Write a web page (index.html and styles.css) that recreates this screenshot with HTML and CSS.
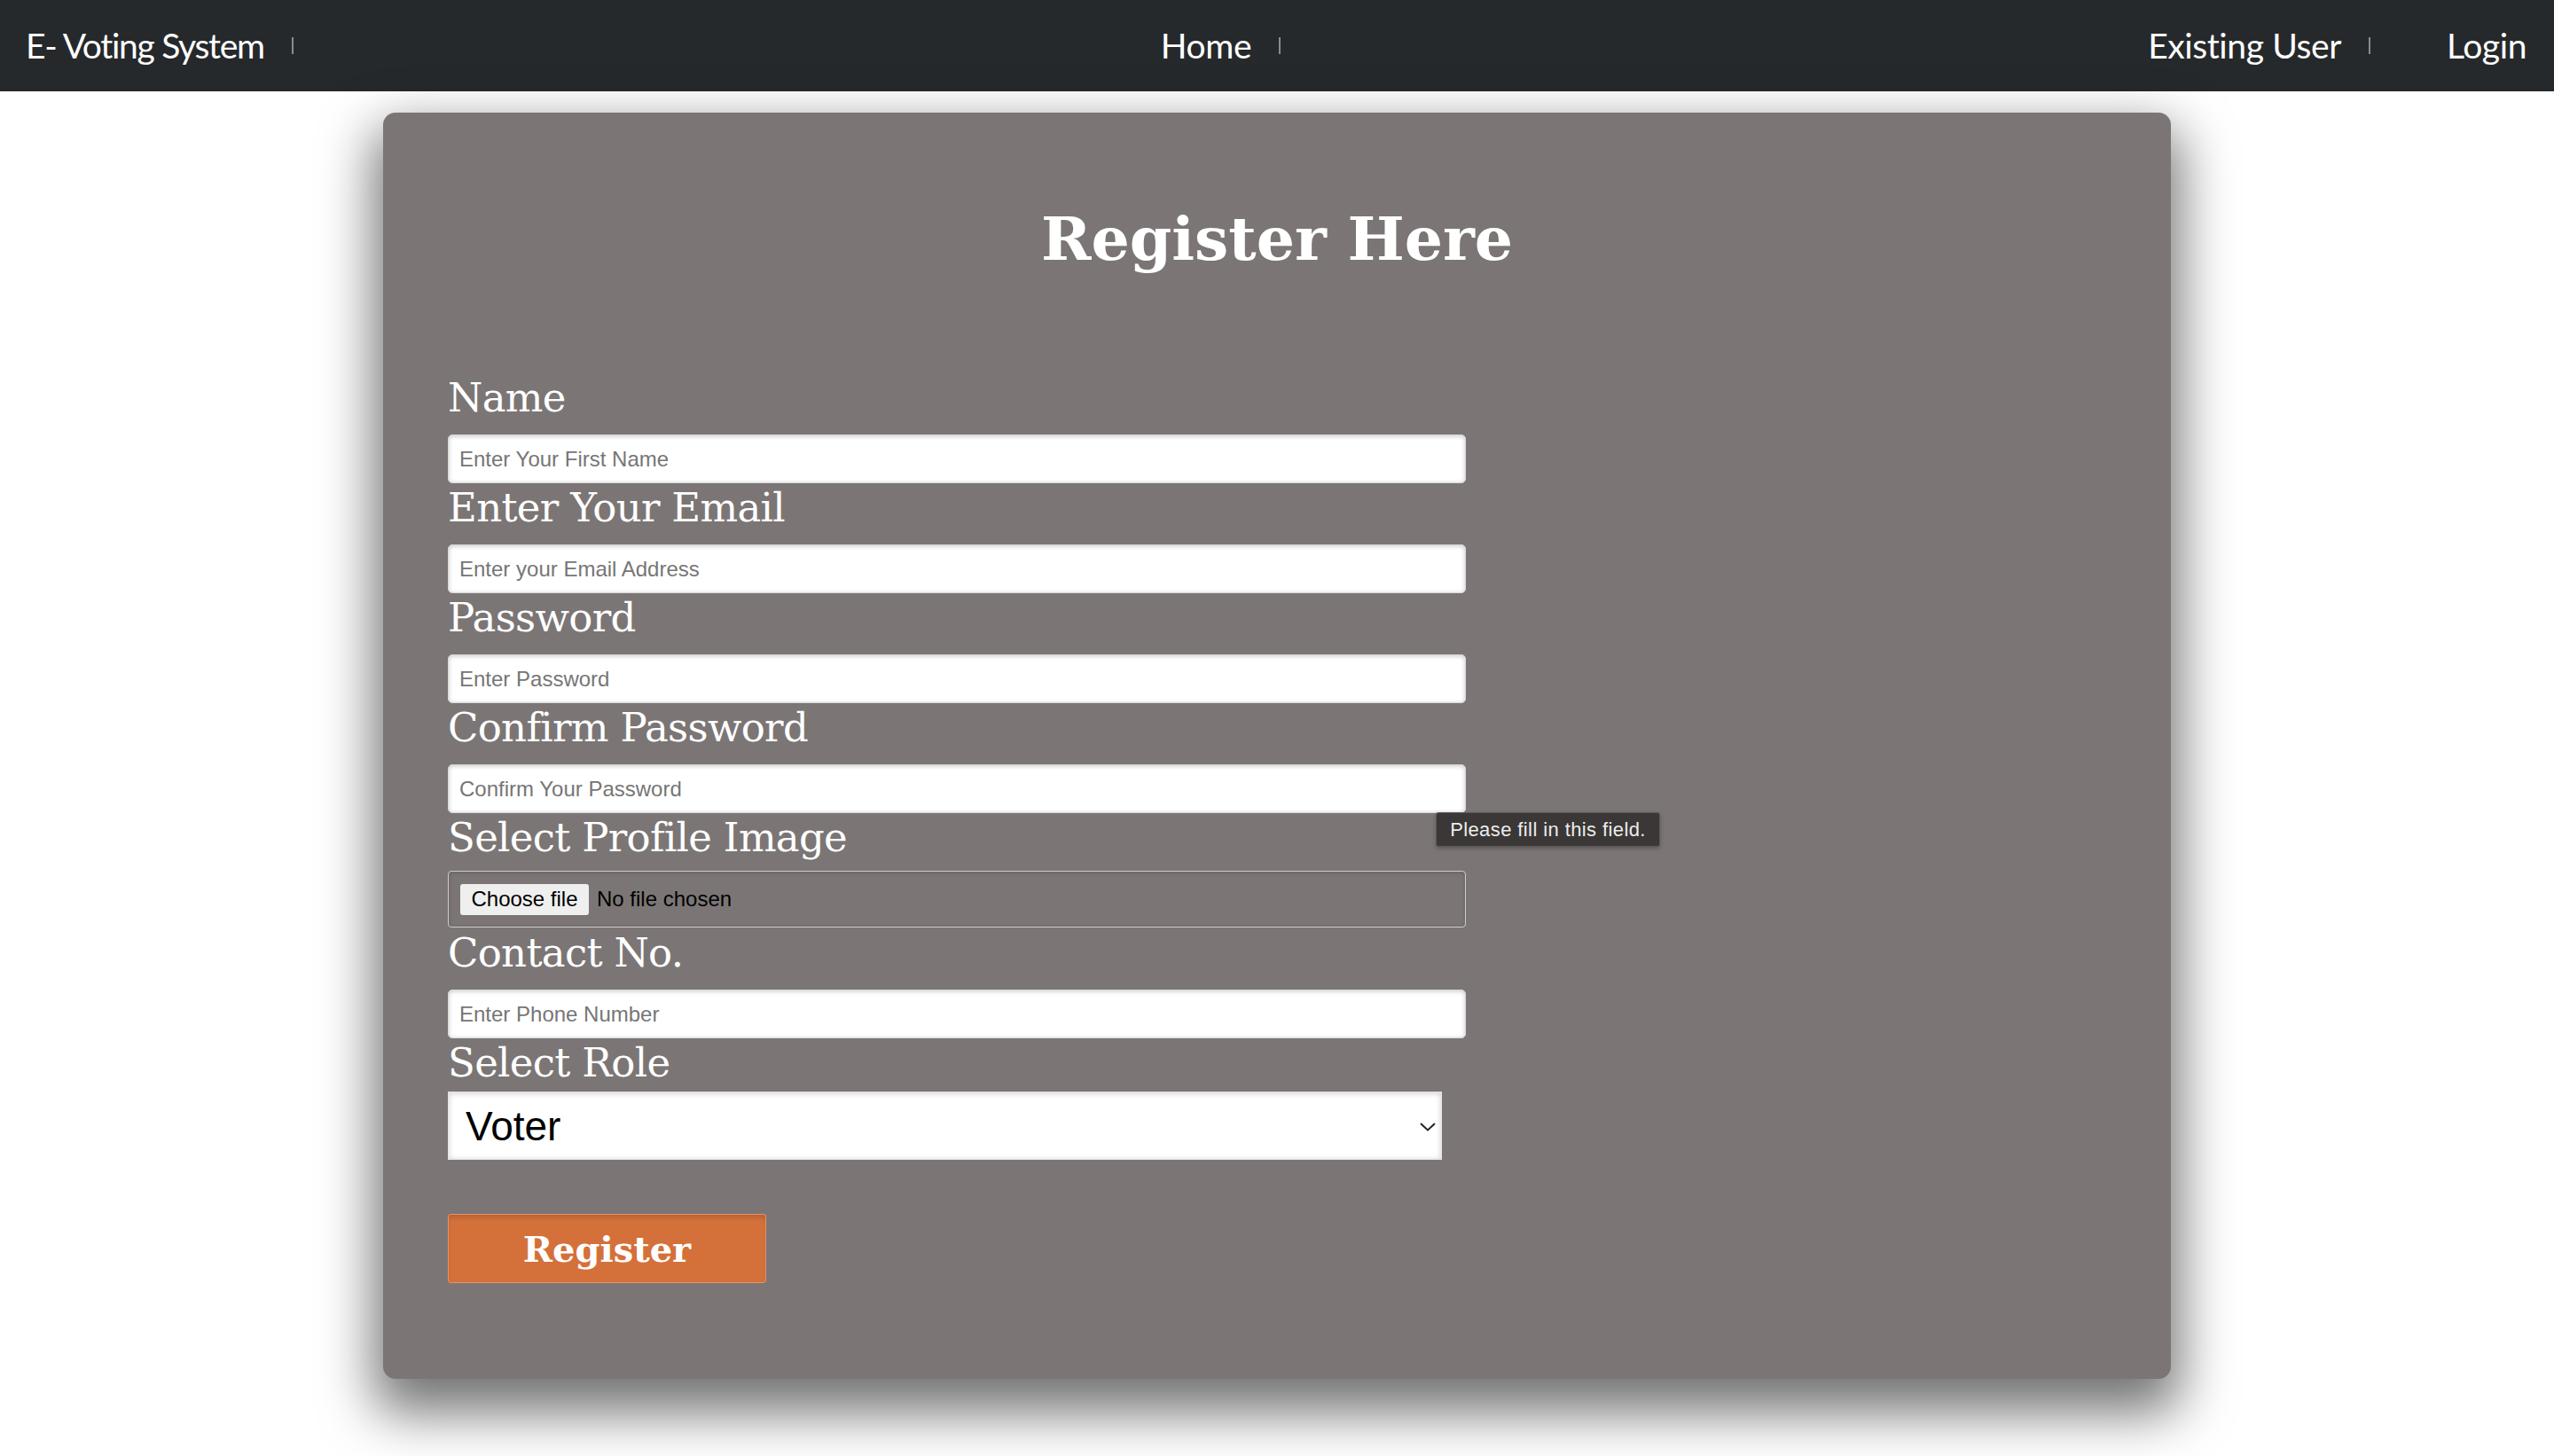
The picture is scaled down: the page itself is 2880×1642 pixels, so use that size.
FILE: index.html
```html
<!DOCTYPE html>
<html lang="en">
<head>
<meta charset="utf-8">
<title>E- Voting System - Register</title>
<link rel="stylesheet" href="styles.css">
</head>
<body>
<nav class="navbar">
  <div class="nav-group">
    <a class="brand" href="#">E- Voting System</a>
    <span class="sep"></span>
  </div>
  <div class="nav-group">
    <a class="nav-link" href="#">Home</a>
    <span class="sep"></span>
  </div>
  <div class="nav-group">
    <a class="nav-link" href="#">Existing User</a>
    <span class="sep sep-wide"></span>
    <a class="nav-link" href="#">Login</a>
  </div>
</nav>

<main class="card">
  <h1 class="title">Register Here</h1>
  <form class="form">
    <label class="label">Name</label>
    <input class="text-input" type="text" placeholder="Enter Your First Name">

    <label class="label">Enter Your Email</label>
    <input class="text-input" type="email" placeholder="Enter your Email Address">

    <label class="label">Password</label>
    <input class="text-input" type="password" placeholder="Enter Password">

    <label class="label">Confirm Password</label>
    <div class="field-wrap">
      <input class="text-input" type="password" placeholder="Confirm Your Password">
      <div class="tooltip">Please fill in this field.</div>
    </div>

    <label class="label">Select Profile Image</label>
    <div class="file-box">
      <span class="file-btn">Choose file</span>
      <span class="file-name">No file chosen</span>
    </div>

    <label class="label">Contact No.</label>
    <input class="text-input" type="tel" placeholder="Enter Phone Number">

    <label class="label">Select Role</label>
    <div class="select-wrap">
      <select class="select">
        <option>Voter</option>
        <option>Candidate</option>
      </select>
      <svg class="chevron" viewBox="0 0 18 10" width="18" height="10" aria-hidden="true">
        <path d="M1 1 L9 8.5 L17 1" fill="none" stroke="#222" stroke-width="2"/>
      </svg>
    </div>

    <button class="btn" type="button">Register</button>
  </form>
</main>
</body>
</html>
```

FILE: styles.css
```css
html, body {
  margin: 0;
  padding: 0;
}

body {
  background: #ffffff;
  font-family: "Liberation Sans", Arial, sans-serif;
  min-height: 1642px;
}

/* ---------- navbar ---------- */
.navbar {
  display: flex;
  justify-content: space-between;
  align-items: center;
  height: 103px;
  padding: 0 31px 0 29px;
  background: #26292b;
  box-sizing: border-box;
}

.nav-group {
  display: flex;
  align-items: center;
}

.brand,
.nav-link {
  font-family: Lato, "Open Sans", sans-serif;
  font-size: 39px;
  color: #ffffff;
  text-decoration: none;
  line-height: 1;
  letter-spacing: -0.4px;
}

.brand {
  letter-spacing: -1.3px;
}

.sep {
  display: block;
  width: 2px;
  height: 19px;
  margin-left: 31px;
  background: #8a8a8a;
}

.sep-wide {
  margin-right: 86px;
}

/* ---------- card ---------- */
.card {
  width: 70%;
  margin: 24px auto 0;
  padding: 101px 73px 108px;
  box-sizing: border-box;
  background: #7b7675;
  border-radius: 14px;
  box-shadow: 0 28px 60px 10px rgba(0, 0, 0, 0.55);
}

.title {
  margin: 0;
  text-align: center;
  font-family: "DejaVu Serif", Georgia, serif;
  font-weight: bold;
  font-size: 68px;
  line-height: 82px;
  color: #ffffff;
}

.form {
  margin-top: 111px;
}

.label {
  display: block;
  font-family: "DejaVu Serif", Georgia, serif;
  font-size: 45px;
  line-height: 56px;
  letter-spacing: -0.7px;
  margin-bottom: 13px;
  color: #ffffff;
}

.text-input {
  display: block;
  width: 1148px;
  height: 55px;
  box-sizing: border-box;
  margin: 0;
  padding: 0 12px;
  border: 1px solid #d9d9d9;
  border-radius: 5px;
  background: #ffffff;
  box-shadow: inset 0 1px 5px rgba(0, 0, 0, 0.22);
  font-family: "Liberation Sans", Arial, sans-serif;
  font-size: 24px;
  color: #222;
  outline: none;
}

.text-input::placeholder {
  color: #767676;
}

.field-wrap {
  position: relative;
  width: 1148px;
}

.tooltip {
  position: absolute;
  left: calc(100% - 34px);
  top: calc(100% - 1px);
  width: 253px;
  height: 39px;
  box-sizing: border-box;
  display: flex;
  align-items: center;
  justify-content: center;
  background: #3a3736;
  border: 1px solid #5c5958;
  border-radius: 3px;
  box-shadow: 0 2px 4px rgba(0, 0, 0, 0.25);
  font-family: "Liberation Sans", Arial, sans-serif;
  font-size: 22px;
  letter-spacing: 0.4px;
  color: #ececec;
  white-space: nowrap;
}

/* ---------- file chooser ---------- */
.file-box {
  display: flex;
  align-items: center;
  width: 1148px;
  height: 64px;
  box-sizing: border-box;
  margin: -4px 0 1px;
  padding: 0 13px;
  border: 1px solid #cfcccc;
  border-radius: 4px;
  box-shadow: inset 0 1px 5px rgba(0, 0, 0, 0.18);
  font-family: "Liberation Sans", Arial, sans-serif;
  font-size: 24px;
  color: #000;
}

.file-btn {
  display: flex;
  align-items: center;
  justify-content: center;
  width: 145px;
  height: 35px;
  background: #efefef;
  border-radius: 3px;
}

.file-name {
  margin-left: 9px;
}

/* ---------- select ---------- */
.select-wrap {
  position: relative;
  width: 1121px;
  margin-top: -9px;
}

.select {
  display: block;
  width: 100%;
  height: 77px;
  box-sizing: border-box;
  margin: 0;
  padding: 0 0 0 19px;
  border: 1px solid #e6e6e6;
  border-radius: 0;
  background: #ffffff;
  box-shadow: inset 0 1px 6px rgba(0, 0, 0, 0.2);
  -webkit-appearance: none;
  appearance: none;
  font-family: "Liberation Sans", Arial, sans-serif;
  font-size: 46px;
  color: #000;
  outline: none;
}

.chevron {
  position: absolute;
  right: 7px;
  top: 35px;
}

/* ---------- button ---------- */
.btn {
  display: block;
  width: 359px;
  height: 78px;
  margin-top: 61px;
  padding: 0;
  box-sizing: border-box;
  background: #d4703a;
  border: 1px solid #e5916a;
  border-radius: 3px;
  box-shadow: inset 0 5px 6px -3px rgba(0, 0, 0, 0.18);
  font-family: "DejaVu Serif", Georgia, serif;
  font-weight: bold;
  font-size: 40px;
  color: #ffffff;
  cursor: pointer;
}
```
